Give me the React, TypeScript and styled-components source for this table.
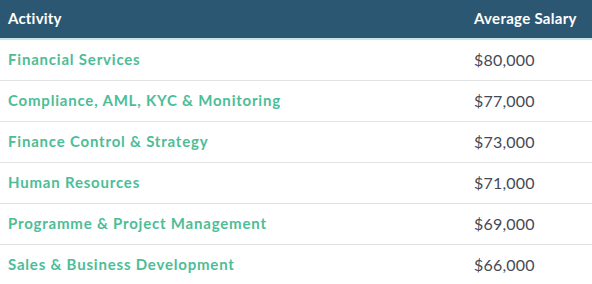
import React from 'react'
import styled, { createGlobalStyle } from 'styled-components'

const GlobalStyle = createGlobalStyle`
    body {
        margin: 0;
        background: #ffffff;
        font-family: 'Lato', 'Noto Sans', sans-serif;
    }
`

const Table = styled.table`
    width: 592px;
    border-collapse: collapse;
    table-layout: fixed;
`

const HeadRow = styled.tr`
    background-color: #2b5773;
    border-bottom: 2px solid #c5e6e4;
`

const HeadCell = styled.th<{ $salary?: boolean }>`
    padding: 8px 0 10px ${p => (p.$salary ? '0' : '8px')};
    line-height: 20px;
    text-align: left;
    color: #ffffff;
    font-size: 15px;
    font-weight: 700;
    letter-spacing: ${p => (p.$salary ? '0.3px' : '0.2px')};
    width: ${p => (p.$salary ? '118px' : 'auto')};
`

const Row = styled.tr`
    border-bottom: 1px solid #e2e2e2;

    &:last-child {
        border-bottom: none;
    }
`

const ActivityCell = styled.td`
    padding: 9px 0 11px 8px;
    line-height: 20px;
    color: #4dbd97;
    font-size: 15px;
    font-weight: 700;
    letter-spacing: 0.8px;
`

const SalaryCell = styled.td`
    padding: 10px 0 10px 0;
    line-height: 20px;
    color: #444a55;
    font-size: 16px;
    font-weight: 400;
    letter-spacing: 0.2px;
`

const rows: Array<[string, string]> = [
    ['Financial Services', '$80,000'],
    ['Compliance, AML, KYC & Monitoring', '$77,000'],
    ['Finance Control & Strategy', '$73,000'],
    ['Human Resources', '$71,000'],
    ['Programme & Project Management', '$69,000'],
    ['Sales & Business Development', '$66,000'],
]

const App: React.FC = () => {
    return (
        <>
            <GlobalStyle />
            <Table>
                <thead>
                    <HeadRow>
                        <HeadCell>Activity</HeadCell>
                        <HeadCell $salary>Average Salary</HeadCell>
                    </HeadRow>
                </thead>
                <tbody>
                    {rows.map(([activity, salary]) => (
                        <Row key={activity}>
                            <ActivityCell>{activity}</ActivityCell>
                            <SalaryCell>{salary}</SalaryCell>
                        </Row>
                    ))}
                </tbody>
            </Table>
        </>
    )
}

export default App
